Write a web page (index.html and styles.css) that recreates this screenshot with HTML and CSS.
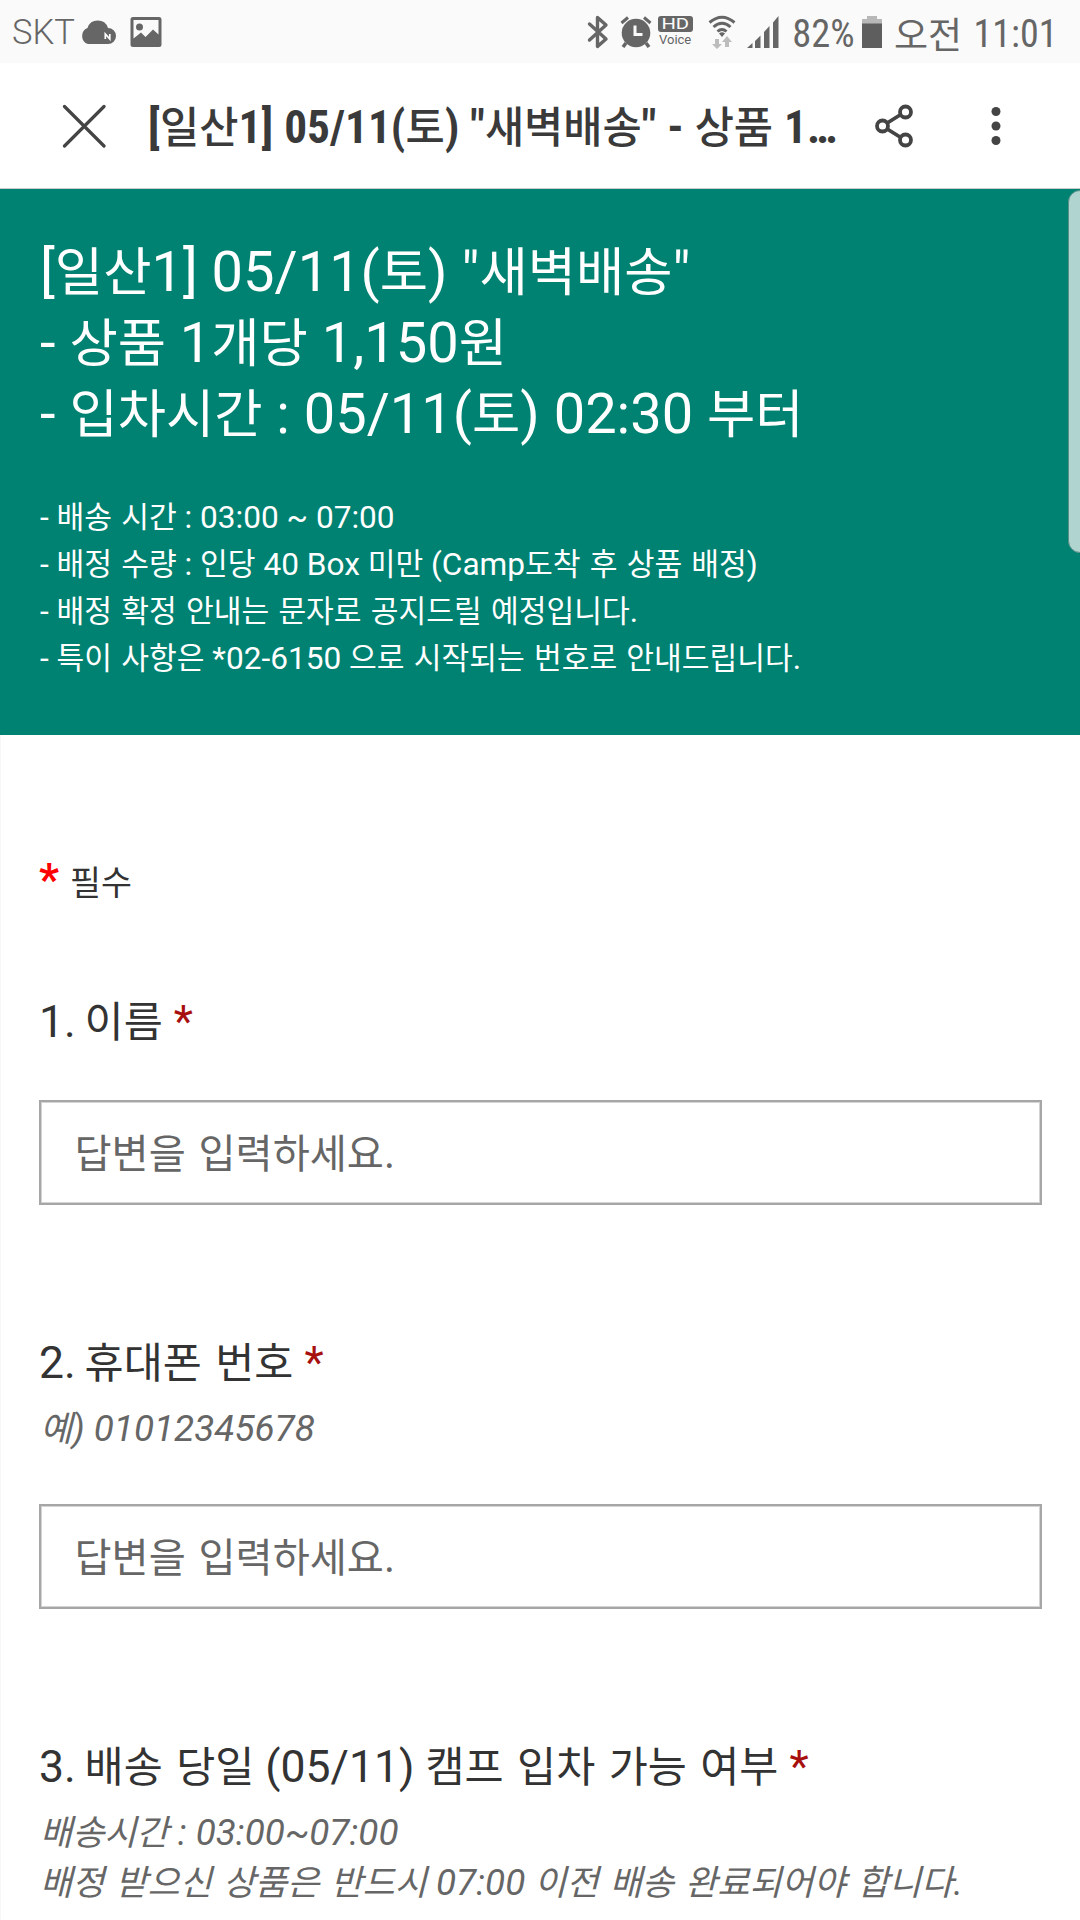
FILE: index.html
```html
<!DOCTYPE html>
<html lang="ko">
<head>
<meta charset="utf-8">
<title>[일산1] 05/11(토) "새벽배송"</title>
<link rel="stylesheet" href="styles.css">
</head>
<body>
<div class="statusbar">
  <span class="carrier">SKT</span>
  <svg class="ic-cloud" width="37" height="27" viewBox="0 0 37 27"><path d="M9 26a8.500 8.500 0 0 1-.500-16A10.800 10.800 0 0 1 29 10A8 8 0 0 1 29 26Z" fill="#666"/><path d="M26.300 21v-5l4.500 5v-5" fill="none" stroke="#fff" stroke-width="1.700"/></svg>
  <svg class="ic-pic" width="32" height="30" viewBox="0 0 32 30"><path fill-rule="evenodd" d="M3 0H29a2.500 2.500 0 0 1 2.500 2.500V27.500A2.500 2.500 0 0 1 29 30H3A2.500 2.500 0 0 1 .500 27.500V2.500A2.500 2.500 0 0 1 3 0ZM3.500 3V21.500L11 15.500L15.500 20L23 12.500L28.500 17.500V3Z" fill="#666"/><circle cx="9.500" cy="10" r="3.500" fill="#666"/></svg>
  <span class="spacer"></span>
  <svg class="ic-bt" width="22" height="34" viewBox="0 0 22 34"><path d="M2.500 9L19 24L10.500 31.500V2.500L19 10L2.500 25" fill="none" stroke="#666" stroke-width="3.400" stroke-linejoin="round" stroke-linecap="round"/></svg>
  <svg class="ic-alarm" width="32" height="32" viewBox="0 0 32 32"><circle cx="16" cy="17" r="14.300" fill="#666"/><path d="M1.500 7L8 1.500M30.500 7L24 1.500" stroke="#666" stroke-width="3"/><path d="M6 27L3 31M26 27L29 31" stroke="#666" stroke-width="3.500"/><path d="M15 9.500V18.500H22.500" fill="none" stroke="#fafafa" stroke-width="3"/></svg>
  <span class="hd"><span class="hd-badge"><span class="hd-wide">HD</span></span><span class="hd-voice">Voice</span></span>
  <svg class="ic-wifi" width="28" height="34" viewBox="0 0 28 34"><g fill="none" stroke="#666" stroke-width="3"><path d="M1.500 7.500Q14-3 26.500 7.500"/><path d="M5.500 12Q14 4.500 22.500 12"/><path d="M9.500 16.500Q14 12.500 18.500 16.500"/></g><path d="M11 18.500Q14 16 17 18.500L14 22Z" fill="#666"/><path d="M7 24h4v5h3L9 34L4 29h3ZM17 32v-5h-3L19 21L24 27h-3v5Z" fill="#bdbdbd"/></svg>
  <svg class="ic-signal" width="32" height="32" viewBox="0 0 32 32"><path d="M0 32L5.500 27V32ZM8 32V25L13.500 19.500V32ZM17 32V16L22.500 10V32ZM26 32V6.500L31.500 0V32Z" fill="#666"/></svg>
  <span class="pct">82%</span>
  <svg class="ic-bat" width="20" height="32" viewBox="0 0 20 32"><path d="M0 3H5V0H15V3H20V8H0Z" fill="#b8b8b8"/><path d="M0 7.500H20V32H0Z" fill="#5e5e5e"/></svg>
  <span class="clock-k k">오전</span><span class="clock">11:01</span>
</div>
<div class="appbar">
  <svg class="ic-close" width="44" height="44" viewBox="0 0 44 44"><path d="M2.500 2.500L42 42M42 2.500L2.500 42" stroke="#444" stroke-width="3.200" stroke-linecap="round"/></svg>
  <h1 class="apptitle">[<span class="k">일산</span>1] 05/11(<span class="k">토</span>) "<span class="k">새벽배송</span>" - <span class="k">상품</span> 1…</h1>
  <svg class="ic-share" width="38" height="44" viewBox="0 0 38 44"><g fill="none" stroke="#444" stroke-width="3.800"><path d="M13 18.500L25 11M13 25.500L25 33"/><circle cx="7.500" cy="22" r="5.500"/><circle cx="30.500" cy="8" r="5.500"/><circle cx="30.500" cy="36" r="5.500"/></g></svg>
  <svg class="ic-more" width="10" height="40" viewBox="0 0 10 40"><g fill="#444"><circle cx="5" cy="5.500" r="4.500"/><circle cx="5" cy="20" r="4.500"/><circle cx="5" cy="34.500" r="4.500"/></g></svg>
</div>
<div class="hero">
  <h2 class="title">
    [<span class="k">일산</span>1] 05/11(<span class="k">토</span>) "<span class="k">새벽배송</span>"<br>
    - <span class="k">상품</span> 1<span class="k">개당</span> 1,150<span class="k">원</span><br>
    - <span class="k">입차시간</span> : 05/11(<span class="k">토</span>) 02:30 <span class="k">부터</span>
  </h2>
  <p class="desc">
    - <span class="k">배송 시간</span> : 03:00 ~ 07:00<br>
    - <span class="k">배정 수량</span> : <span class="k">인당</span> 40 Box <span class="k">미만</span> (Camp<span class="k">도착 후 상품 배정</span>)<br>
    - <span class="k">배정 확정 안내는 문자로 공지드릴 예정입니다</span>.<br>
    - <span class="k">특이 사항은</span> *02-6150 <span class="k">으로 시작되는 번호로 안내드립니다</span>.
  </p>
</div>
<div class="form">
  <p class="required"><span class="star">*</span><span class="k">필수</span></p>
  <div class="question first">
    <h3 class="qtitle"><span class="num">1. </span><span class="k">이름</span> <span class="req">*</span></h3>
    <div class="field"><span class="k">답변을 입력하세요</span>.</div>
  </div>
  <div class="question">
    <h3 class="qtitle"><span class="num">2. </span><span class="k">휴대폰 번호</span> <span class="req">*</span></h3>
    <p class="sub"><span class="k">예</span>) 01012345678</p>
    <div class="field"><span class="k">답변을 입력하세요</span>.</div>
  </div>
  <div class="question">
    <h3 class="qtitle"><span class="num">3. </span><span class="k">배송 당일</span> (05/11) <span class="k">캠프 입차 가능 여부</span> <span class="req">*</span></h3>
    <p class="sub"><span class="k">배송시간</span> : 03:00~07:00<br><span class="k">배정 받으신 상품은 반드시</span> 07:00 <span class="k">이전 배송 완료되어야 합니다</span>.</p>
  </div>
</div>
<div class="edge-handle"></div>
</body>
</html>
```
FILE: styles.css
```css
* { box-sizing: border-box; margin: 0; padding: 0; }
body { width: 1080px; height: 1920px; overflow: hidden; background: #fff; font-family: Roboto, "Noto Sans CJK KR", sans-serif; color: #333; position: relative; }
svg { display: block; flex: none; }
.k { font-family: "Noto Sans CJK KR", sans-serif; font-size: 0.955em; line-height: 0; word-spacing: 0.035em; }

/* status bar */
.statusbar { height: 63px; background: #fafafa; display: flex; align-items: center; padding: 0 22.500px 0 12px; color: #666; white-space: nowrap; }
.carrier { font-size: 34.500px; font-weight: 300; width: 67px; }
.ic-cloud { margin-right: 14px; }
.spacer { flex: 1; }
.ic-bt { margin-right: 11.500px; }
.ic-alarm { margin-right: 5px; }
.hd { width: 36px; display: flex; flex-direction: column; align-items: center; margin-right: 15px; }
.hd-badge { width: 35px; height: 16px; border-radius: 3px; background: #666; color: #fafafa; font-size: 15px; line-height: 16px; text-align: center; }
.hd-wide { display: inline-block; transform: scaleX(1.35); }
.hd-voice { font-size: 13px; line-height: 15px; }
.ic-wifi { margin-right: 10.500px; }
.ic-signal { margin-right: 13.500px; }
.pct { font-size: 38.500px; font-stretch: 75%; margin-right: 7.500px; padding-top: 4px; }
.ic-bat { margin-right: 12px; }
.statusbar .clock-k { font-size: 37px; margin-right: 11.500px; padding-top: 3px; }
.clock { font-size: 38px; font-stretch: 75%; padding-top: 4px; }

/* browser bar */
.appbar { height: 126px; border-bottom: 1px solid #c8ccca; display: flex; align-items: center; padding-left: 62px; }
.apptitle { font-size: 45.300px; font-weight: 700; font-stretch: 75%; margin-left: 42px; padding-top: 4px; width: 727px; white-space: nowrap; color: #3a3a3a; word-spacing: 0.500px; }
.apptitle .k { font-size: 0.942em; font-weight: 500; }
.ic-share { margin-right: 77.500px; }

/* form header */
.hero { height: 546px; background: #008272; color: #fff; padding: 48px 39px 0 40px; }
.title { font-size: 56px; line-height: 71px; font-weight: 400; }
.title .k { font-size: 0.937em; }
.desc { font-size: 31.600px; line-height: 47px; margin-top: 44px; }
.desc .k { word-spacing: 0.025em; }

/* questions */
.form { padding: 0 38px; height: 1185px; border-left: 1px solid #f7f7f7; }
.required { font-size: 35.200px; height: 174px; padding-top: 120px; line-height: 50px; }
.star { color: #f00; font-weight: 700; font-size: 44px; margin-right: 11px; }
.question { padding-top: 128px; }
.question.first { padding-top: 83px; }
.qtitle { font-size: 44.500px; font-weight: 400; line-height: 60px; color: #333; }
.num { word-spacing: -2.200px; }
.req { color: #a80f0f; }
.sub { margin-top: 10.500px; padding-left: 1px; font-size: 36.900px; line-height: 50px; font-style: italic; color: #666; }
.sub .k { font-size: 0.948em; }
.field { margin-top: 48px; height: 105px; border: 2px solid #a6a6a6; box-shadow: inset 0 0 0 1px #d4d4d4; font-size: 42px; line-height: 103px; padding-left: 33.500px; color: #666; }
.field .k { font-size: 0.960em; }
.sub + .field { margin-top: 50.500px; }

/* edge panel handle over the page */
.edge-handle { position: absolute; left: 1068px; top: 190px; width: 24px; height: 363px; border-radius: 16px; background: #b0d5d0; border: 1px solid #5d8f88; }
```
